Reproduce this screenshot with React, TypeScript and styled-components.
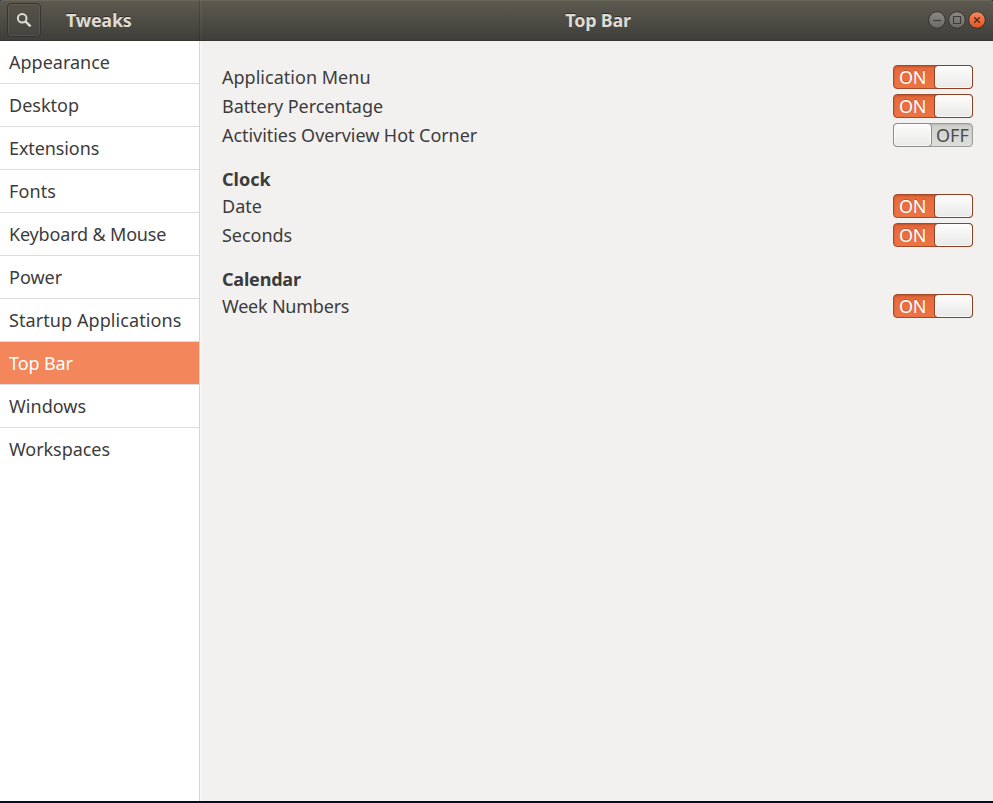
import React from "react";
import styled, { createGlobalStyle, css } from "styled-components";

const GlobalStyle = createGlobalStyle`
  * { box-sizing: border-box; }
  body { margin: 0; background: #1c2850; overflow: hidden; }
`;

const Window = styled.div`
  display: flex;
  flex-direction: column;
  width: 993px;
  height: 803px;
  border-bottom: 2px solid #060b2e;
  font-family: "Noto Sans", "Open Sans", sans-serif;
  font-size: 18px;
  color: #3c3c3c;
  overflow: hidden;
`;

const HeaderBar = styled.header`
  display: flex;
  flex: none;
  height: 41px;
  padding-bottom: 1px;
  background: linear-gradient(#5d5b50, #57554b 20%, #3e3d39);
  box-shadow: inset 0 1px #69665a, inset 0 -1px #363531;
  border-radius: 3px 3px 0 0;
`;

const HeaderLeft = styled.div`
  display: flex;
  align-items: center;
  width: 200px;
  padding-left: 7px;
  border-right: 1px solid rgba(0, 0, 0, 0.16);
`;

const HeaderRight = styled.div`
  display: grid;
  grid-template-columns: 65px 1fr 64px;
  align-items: center;
  flex: 1;
  border-left: 2px solid rgba(255, 255, 255, 0.035);
`;

const SearchButton = styled.button`
  display: flex;
  align-items: center;
  justify-content: center;
  width: 34px;
  height: 34px;
  padding: 0;
  border: 1px solid #353430;
  border-radius: 4px;
  background: linear-gradient(#555349, #454440);
  box-shadow: inset 0 0 0 1px rgba(255, 255, 255, 0.07);
`;

const Title = styled.h1<{ $track?: number }>`
  margin: 0;
  font-size: 18px;
  line-height: 24px;
  font-weight: 700;
  color: #dfdbd2;
  text-shadow: 0 -1px rgba(0, 0, 0, 0.45);
  letter-spacing: ${(p) => p.$track ?? 0}px;
  white-space: nowrap;
`;

const SideTitle = styled(Title)`
  margin-left: 25px;
`;

const CenterTitle = styled(Title)`
  justify-self: center;
`;

const WindowControls = styled.div`
  display: flex;
  grid-column: 3;
  gap: 2px;
  margin-left: -1px;
`;

const ControlIcon = styled.svg`
  display: block;
  width: 18px;
  height: 18px;
`;

const Body = styled.div`
  display: flex;
  flex: 1;
  min-height: 0;
  background: #f2f1f0;
`;

const Sidebar = styled.nav`
  width: 200px;
  flex: none;
  background: #fff;
  border-right: 1px solid #d8d7d5;
`;

const SidebarItem = styled.div<{ $selected: boolean; $last: boolean; $track: number }>`
  height: 43px;
  padding-left: 9px;
  line-height: 42px;
  white-space: nowrap;
  letter-spacing: ${(p) => p.$track}px;
  border-bottom: 1px solid ${(p) => (p.$last ? "transparent" : "#dcdcdc")};
  ${(p) =>
    p.$selected &&
    css`
      background: #f3865b;
      color: #fff;
    `}
`;

const Content = styled.main`
  flex: 1;
  padding: 24px 20px 0;
  border-left: 2px solid #f7f6f5;
`;

const Group = styled.section`
  display: flex;
  flex-direction: column;
  gap: 5px;
  margin-bottom: 20px;
`;

const GroupTitle = styled.h2<{ $track: number }>`
  margin: 0 0 -2px;
  font-size: 18px;
  line-height: 24px;
  height: 24px;
  letter-spacing: ${(p) => p.$track}px;
`;

const Row = styled.div`
  display: flex;
  align-items: center;
  justify-content: space-between;
  height: 24px;
`;

const Label = styled.span<{ $track: number }>`
  line-height: 24px;
  white-space: nowrap;
  letter-spacing: ${(p) => p.$track}px;
`;

const Track = styled.div<{ $on: boolean }>`
  display: flex;
  flex-direction: ${(p) => (p.$on ? "row" : "row-reverse")};
  width: 80px;
  height: 24px;
  border: 1px solid ${(p) => (p.$on ? "#a34a2a" : "#9d9d9b")};
  border-radius: 4px;
  background: ${(p) => (p.$on ? "linear-gradient(#e5683b, #ed7445)" : "linear-gradient(#cfcfce, #dededd)")};
  box-shadow: inset 0 1px 2px ${(p) => (p.$on ? "rgba(140, 50, 10, 0.4)" : "rgba(0, 0, 0, 0.12)")};
`;

const TrackText = styled.span<{ $on: boolean }>`
  flex: 1;
  padding-left: 5px;
  line-height: 23px;
  white-space: nowrap;
  letter-spacing: ${(p) => (p.$on ? -0.4 : 0)}px;
  color: ${(p) => (p.$on ? "#fff" : "#4c4c4c")};
  text-shadow: ${(p) => (p.$on ? "0 -1px rgba(150, 60, 20, 0.5)" : "none")};
`;

const Knob = styled.span<{ $on: boolean }>`
  flex: none;
  width: 39px;
  height: 24px;
  margin: -1px;
  border: 1px solid ${(p) => (p.$on ? "#8e3f24" : "#8d8d8b")};
  border-radius: 4px;
  background: linear-gradient(#fdfdfd, #e9e9e8);
  box-shadow: inset 0 0 0 1px rgba(255, 255, 255, 0.7);
`;

function Switch({ on }: { on: boolean }) {
  return (
    <Track $on={on} role="switch" aria-checked={on}>
      <TrackText $on={on}>{on ? "ON" : "OFF"}</TrackText>
      <Knob $on={on} />
    </Track>
  );
}

const pages: [string, number][] = [
  ["Appearance", 0],
  ["Desktop", 0],
  ["Extensions", -0.1],
  ["Fonts", 0.1],
  ["Keyboard & Mouse", -0.17],
  ["Power", 0],
  ["Startup Applications", 0.08],
  ["Top Bar", -0.1],
  ["Windows", 0.05],
  ["Workspaces", -0.05],
];

type Setting = { label: string; on: boolean; track: number };

const groups: { title?: string; track?: number; rows: Setting[] }[] = [
  {
    rows: [
      { label: "Application Menu", on: true, track: 0.02 },
      { label: "Battery Percentage", on: true, track: -0.06 },
      { label: "Activities Overview Hot Corner", on: false, track: -0.05 },
    ],
  },
  {
    title: "Clock",
    track: 0,
    rows: [
      { label: "Date", on: true, track: 0 },
      { label: "Seconds", on: true, track: -0.03 },
    ],
  },
  { title: "Calendar", track: -0.2, rows: [{ label: "Week Numbers", on: true, track: -0.22 }] },
];

function WindowControl({ kind }: { kind: "minimize" | "maximize" | "close" }) {
  const close = kind === "close";
  const id = `control-${kind}`;
  return (
    <ControlIcon viewBox="0 0 18 18" aria-label={kind}>
      <defs>
        <linearGradient id={id} x1="0" y1="0" x2="0" y2="1">
          <stop offset="0" stopColor={close ? "#f58a62" : "#8b8982"} />
          <stop offset="1" stopColor={close ? "#e4511f" : "#6b6963"} />
        </linearGradient>
      </defs>
      <circle cx="9" cy="9" r="8.3" fill={`url(#${id})`} stroke="#36342f" strokeWidth="1" />
      <g fill="none" stroke={close ? "#4f2516" : "#3c3b37"} strokeWidth="1.1">
        {kind === "minimize" && <path d="M5 9.5h8" />}
        {kind === "maximize" && <path d="M5.5 5.5h7v7h-7z" />}
        {close && <path d="M6.2 6.2l5.6 5.6M11.8 6.2l-5.6 5.6" strokeWidth="1.3" />}
      </g>
    </ControlIcon>
  );
}

export default function App() {
  return (
    <>
      <GlobalStyle />
      <Window>
        <HeaderBar>
          <HeaderLeft>
            <SearchButton aria-label="Search">
              <svg width="16" height="16" viewBox="0 0 16 16" fill="none" stroke="#dfdbd2">
                <circle cx="6.2" cy="6.2" r="4.3" strokeWidth="2" />
                <path d="M9.3 9.3L14.6 14.3" strokeWidth="2.4" />
              </svg>
            </SearchButton>
            <SideTitle $track={-0.27}>Tweaks</SideTitle>
          </HeaderLeft>
          <HeaderRight>
            <span />
            <CenterTitle $track={-0.25}>Top Bar</CenterTitle>
            <WindowControls>
              <WindowControl kind="minimize" />
              <WindowControl kind="maximize" />
              <WindowControl kind="close" />
            </WindowControls>
          </HeaderRight>
        </HeaderBar>
        <Body>
          <Sidebar>
            {pages.map(([name, track], i) => (
              <SidebarItem
                key={name}
                $selected={name === "Top Bar"}
                $last={i === pages.length - 1}
                $track={track}
              >
                {name}
              </SidebarItem>
            ))}
          </Sidebar>
          <Content>
            {groups.map((group, i) => (
              <Group key={i}>
                {group.title && <GroupTitle $track={group.track ?? 0}>{group.title}</GroupTitle>}
                {group.rows.map((row) => (
                  <Row key={row.label}>
                    <Label $track={row.track}>{row.label}</Label>
                    <Switch on={row.on} />
                  </Row>
                ))}
              </Group>
            ))}
          </Content>
        </Body>
      </Window>
    </>
  );
}
